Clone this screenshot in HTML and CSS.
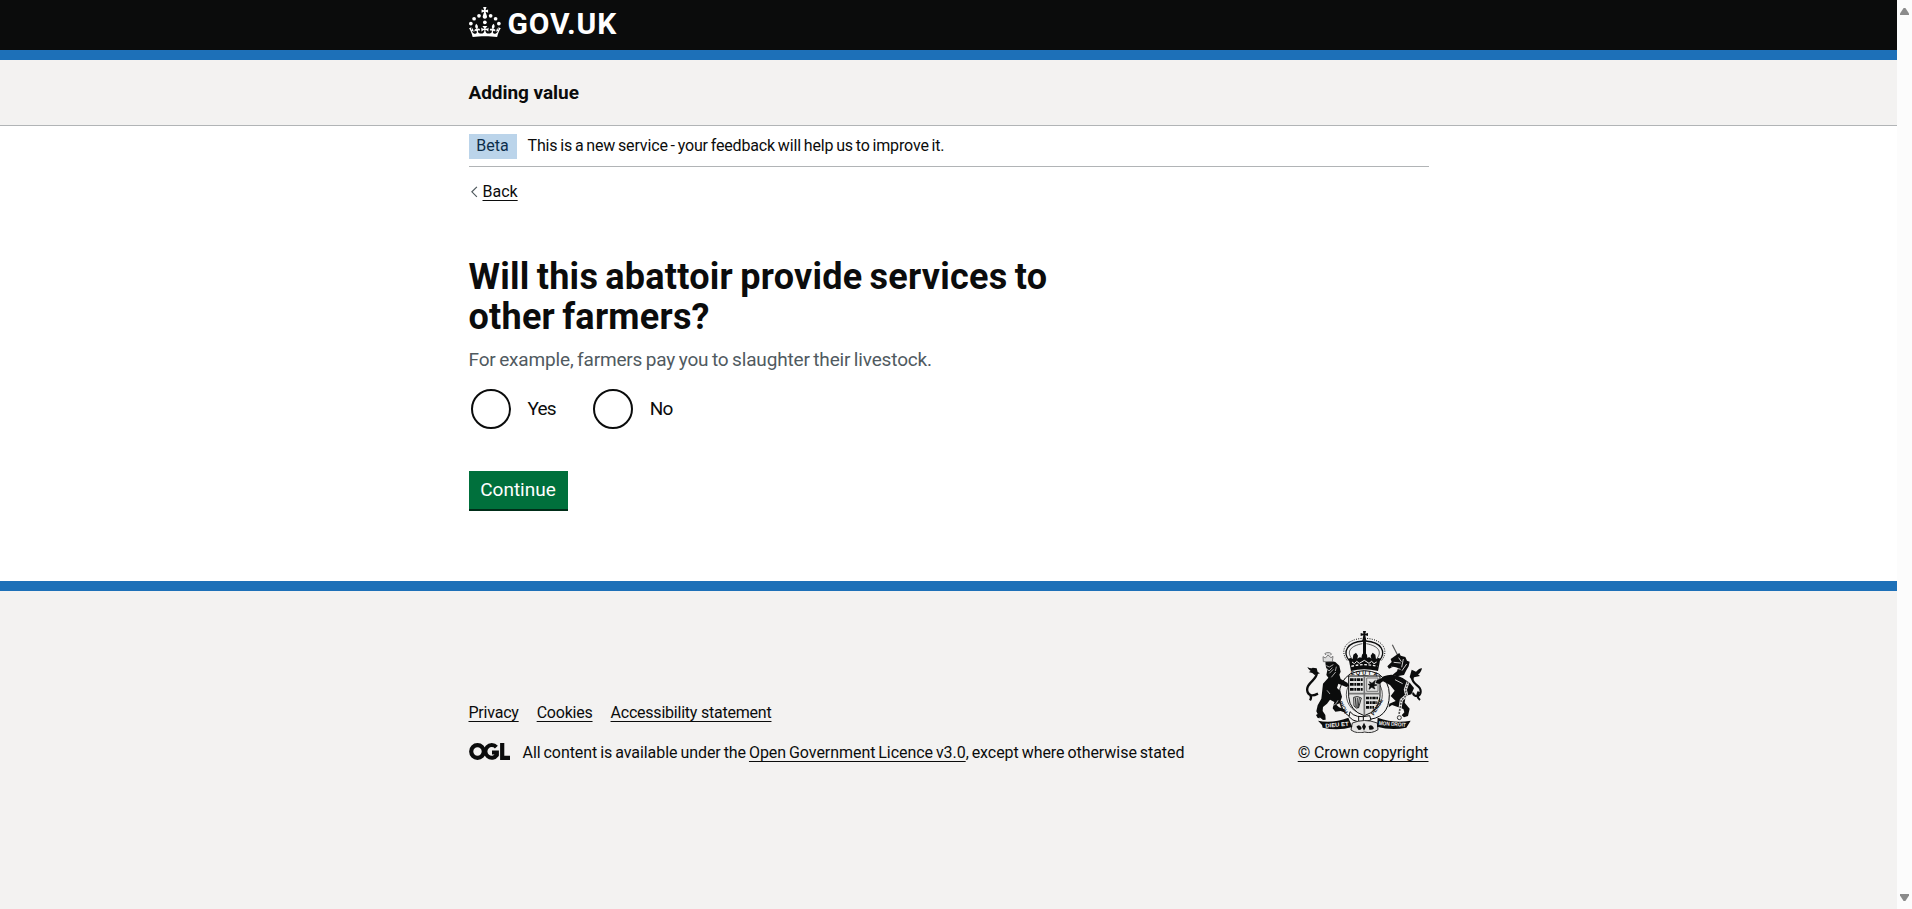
FILE: index.html
```html
<!DOCTYPE html>
<html lang="en">
<head>
<meta charset="utf-8">
<title>Adding value</title>
<link rel="stylesheet" href="styles.css">
</head>
<body>
<div class="viewport">
<div class="page">
  <header class="header">
    <div class="container header-inner">
      <svg class="crown" viewBox="0 0 64 60" width="32" height="30" fill="currentColor" aria-hidden="true">
        <circle cx="20" cy="17.6" r="3.7"/><circle cx="10.2" cy="23.5" r="3.7"/><circle cx="3.7" cy="33.2" r="3.7"/><circle cx="31.7" cy="30.6" r="3.7"/><circle cx="43.3" cy="17.6" r="3.7"/><circle cx="53.2" cy="23.5" r="3.7"/><circle cx="59.7" cy="33.2" r="3.7"/>
        <path d="M33.1,9.8c.2-.1.3-.3.5-.5l4.6,2.4v-6.8l-4.6,1.5c-.1-.2-.3-.3-.5-.5l1.9-5.9h-6.7l1.9,5.9c-.2.1-.3.3-.5.5l-4.6-1.5v6.8l4.6-2.4c.1.2.3.3.5.5l-2.6,8c-.9,2.8,1.2,5.7,4.1,5.7h0c3,0,5.1-2.9,4.1-5.7l-2.6-8ZM37,37.9s-3.4,3.8-4.1,6.1c2.2,0,4.2-.5,6.4-2.8l-.7,8.5c-2-2.8-4.4-4.1-5.7-3.8.1,3.1.5,6.7,5.8,7.2,3.7.3,6.7-1.5,7-3.8.4-2.6-2-4.3-3.7-1.6-1.4-4.5,2.4-6.1,4.9-3.2-1.9-4.5-1.8-7.7,2.4-10.9,3,4,2.6,7.3-1.2,11.1,2.4-1.3,6.2,0,4,4.6-1.2-2.8-3.7-2.2-4.2.2-.3,1.7.7,3.7,3,4.2,1.9.3,4.7-.9,7-5.9-1.3,0-2.4.7-3.9,1.7l2.4-8c.6,2.3,1.4,3.7,2.2,4.5.6-1.6.5-2.8,0-5.3l5,1.8c-2.6,3.6-5.2,8.7-7.3,17.5-7.4-1.1-15.7-1.7-24.5-1.7h0c-8.8,0-17.1.6-24.5,1.7-2.1-8.9-4.7-13.9-7.3-17.5l5-1.8c-.5,2.5-.6,3.7,0,5.3.8-.8,1.6-2.3,2.2-4.5l2.4,8c-1.5-1-2.6-1.7-3.9-1.7,2.3,5,5.2,6.2,7,5.9,2.3-.4,3.3-2.4,3-4.2-.5-2.4-3-3.1-4.2-.2-2.2-4.6,1.6-6,4-4.6-3.7-3.7-4.2-7.1-1.2-11.1,4.2,3.2,4.3,6.4,2.4,10.9,2.5-2.8,6.3-1.3,4.9,3.2-1.8-2.7-4.1-1-3.7,1.6.3,2.3,3.3,4.1,7,3.8,5.4-.5,5.7-4.2,5.8-7.2-1.3-.2-3.7,1-5.7,3.8l-.7-8.5c2.2,2.3,4.2,2.7,6.4,2.8-.7-2.3-4.1-6.1-4.1-6.1h10.6Z"/>
      </svg>
      <span class="wordmark">GOV.UK</span>
    </div>
  </header>
  <div class="service"><div class="container service-name">Adding value</div></div>
  <main class="container main">
    <div class="phase"><span class="tag">Beta</span><span class="phase-text">This is a new service - your feedback will help us to improve it.</span></div>
    <div class="back"><svg class="chevron" width="7" height="12" viewBox="0 0 7 12" fill="none" stroke="#505a5f" stroke-width="1.2" aria-hidden="true"><path d="M5.9.8.9 5.8l5 5"/></svg><a class="link">Back</a></div>
    <h1 class="title">Will this abattoir provide services to<br>other farmers?</h1>
    <p class="hint">For example, farmers pay you to slaughter their livestock.</p>
    <div class="radios">
      <label class="radio"><span class="ring"></span>Yes</label>
      <label class="radio"><span class="ring"></span>No</label>
    </div>
    <button class="button">Continue</button>
  </main>
  <footer class="footer">
    <div class="container footer-inner">
      <div class="footer-left">
        <div class="links"><a class="link">Privacy</a><a class="link">Cookies</a><a class="link">Accessibility statement</a></div>
        <div class="licence">
          <svg width="41" height="17" viewBox="0 0 41 17" fill="none" stroke="#0b0c0c" aria-hidden="true"><circle cx="8.5" cy="8.5" r="6.3" stroke-width="4.2"/><path d="M27.4 4.2A6.3 6.3 0 1 0 27.9 12V9.6H23" stroke-width="4"/><path d="M33.2 0v14.9H41" stroke-width="4.2"/></svg>
          <span class="licence-text">All content is available under the <a class="link">Open Government Licence v3.0</a>, except where otherwise stated</span>
        </div>
      </div>
      <div class="footer-right">
        <svg class="crest" width="116" height="102" viewBox="48 33 348 306" aria-hidden="true">
          <g fill="#0b0c0c">
            <!-- royal crown -->
            <path d="M219 33h9l-2 8 8-2v9l-8-2 2 11h-10l2-11-8 2v-9l8 2z"/>
            <circle cx="223" cy="61" r="6"/>
            <path d="M219 64h9v40h-9z"/>
            <path d="M176 116q7-5 12 1l2-13 8-6 6 9-2 9q8-8 12-2l2-10 7-9 8 9 1 10q6-5 12 2l-2-9 6-9 8 6 2 13q6-5 13-1l-7 37q-43-11-81 0z"/>
          </g>
          <g fill="none" stroke="#0b0c0c">
            <path d="M177 121c-20-25-6-55 42-58M269 121c20-25 6-55-42-58" stroke-width="4"/>
            <path d="M184 114c-14-20-3-36 33-43M262 114c14-20 3-36-33-43" stroke-width="2"/>
            <path d="M171 121c-22-29-6-62 46-66M275 121c22-29 6-62-46-66" stroke-width="3" stroke-dasharray="3 4"/>
          </g>
          <path d="M184 139q39-10 78 0" stroke="#f3f2f1" stroke-width="4" stroke-dasharray="8 5" fill="none"/>
          <path d="M186 126l7 5 7-7 8 6 15-9 14 9 8-6 7 7 8-5" stroke="#f3f2f1" stroke-width="3" fill="none"/>
          <!-- garter and shield -->
          <path d="M180 162q-32 22-32 62 0 75 75 75t75-75q0-40-32-62-43-20-86 0z" fill="#f3f2f1" stroke="#0b0c0c" stroke-width="3"/>
          <ellipse cx="223" cy="224" rx="54" ry="57" fill="#f3f2f1" stroke="#0b0c0c" stroke-width="2"/>
          <path d="M176 168h94v62q-3 43-47 57-44-14-47-57z" fill="#e2e2e1" stroke="#0b0c0c" stroke-width="3"/>
          <path d="M223 168v118M177 221h92" stroke="#777" stroke-width="5"/>
          <g fill="none" stroke="#0b0c0c">
            <path d="M180 179h39M180 193h39M180 208h39" stroke-width="8" stroke-dasharray="11 2 5 2"/>
            <path d="M228 234h38M228 248h34M228 262h24" stroke-width="8" stroke-dasharray="10 2 5 2"/>
            <path d="M230 174h34v40h-34z" stroke="#777" stroke-width="3"/>
            <path d="M238 185l8 5 10-9-3 12 8 2-10 4 4 8-10-5-8 6 3-11-6-4 8-1z" fill="#0b0c0c" stroke-width="2"/>
            <path d="M191 232q11-6 23 2l-8 29q-7 5-14-5zM196 233l2 28M202 233l-1 30M208 234l-4 30" stroke-width="2.5"/>
          </g>
          <g class="motto">
            <text x="184" y="166" transform="rotate(-12 184 166)">E</text><text x="198" y="165">Q</text><text x="217" y="165">U</text><text x="236" y="165">I</text><text x="250" y="166" transform="rotate(20 250 166)">A</text>
            <text x="174" y="277" transform="rotate(-118 174 277)">HONI</text>
            <text x="251" y="287" transform="rotate(-58 251 287)">PENSE</text>
          </g>
          <!-- lion -->
          <g fill="#0b0c0c">
            <path d="M106 127l14-5 16 4 12 11 4 18-4 9 4 13 20 11 6 9-9 4-24-10-4 13 10 9 5 17-6 19-11 5 8 8 15 5 4 11-14-5-16 2-8-10 5-19-13-7-9 12-12 10-1 12 8 12 1 14-8 1-11-9 2 4-7-1-5-9 5-3-4-8 4-18 11-20 3-27 2-18 16-18-6-8 3-14-4-9z"/>
            <path d="M52 141q12 7 16 2l12 2 3 11 7 4-16 5q-7-9-18-8l6-4q-7-4-10-12z"/>
          </g>
          <path d="M80 158c5 21-37 31-27 59q7 16 31 4M60 241q6-8 0-17" fill="none" stroke="#0b0c0c" stroke-width="7"/>
          <path d="M100 125l-1-15 7 4 8-9 9 8 6-4-2 16zM108 105q-8-5 2-7h9q10 3 2 8" fill="#ddd" stroke="#666" stroke-width="2.5"/>
          <g fill="none" stroke="#f3f2f1" stroke-width="2"><path d="M109 137l9 4 12-7M110 145l7 8 10-10M118 160l12-12M124 172l13-16M139 140l-3 13M111 211l9 11M144 241q-4 11-13 15"/></g>
          <!-- unicorn -->
          <path d="M307 74l16 32" stroke="#555" stroke-width="3.5"/>
          <g fill="#0b0c0c">
            <path d="M318 106l10-7 4 8 14 4 5 11 8 3-3 14-7 12-7 14-21 4-13-5 13-10 3-10-13-4-14 6-5-7 13-13-3-9z"/>
            <path d="M281 169q28-12 57 5l22 15 12 15-8 19-17 5-3 20 15 18-5 22-12 4-7-6 8-9-3-10-19-7-15-5-10 7 2-11 19-8-15-15 12-16-14-17-21-11-11 8-11-3 3-9 12-4z"/>
            <path d="M365 149l13 6q11-11 18-10-3 14-12 18l6 5-18 4-4 12-9-13z"/>
          </g>
          <path d="M367 175c-1 20 31 21 24 45-5 14-26 7-20-2M390 240q-13-10-4-25" fill="none" stroke="#0b0c0c" stroke-width="6.5"/>
          <path d="M311 127l21 2M326 113l8 12M340 117l-5 25M350 132l-14 20M304 141l28 7M315 179l23 12" stroke="#f3f2f1" stroke-width="2.5" fill="none"/>
          <path d="M354 186l-8 23 4 17-16 14-3 19-4 24" fill="none" stroke="#f3f2f1" stroke-width="9"/>
          <path d="M354 186l-8 23 4 17-16 14-3 19-4 24" fill="none" stroke="#555" stroke-width="5" stroke-dasharray="6 3"/>
          <circle cx="328" cy="293" r="6" fill="#f3f2f1" stroke="#333" stroke-width="3"/>
          <!-- buckle, roots and scroll -->
          <path d="M180 275q16 22 59 12l4 13q-46 15-66-10z" fill="#f3f2f1" stroke="#0b0c0c" stroke-width="3"/>
          <path d="M206 288v17M220 290v16" stroke="#0b0c0c" stroke-width="3"/>
          <path d="M187 309q36-15 75 0l2 20q-19 13-40 7-22 7-41-6z" fill="#e4e3e2" stroke="#333" stroke-width="3"/>
          <path d="M199 320q8-9 14 0t-7 10zM236 319q8-7 14 2t-12 8zM222 308l6 12-6 12-6-12z" fill="#0b0c0c"/>
          <path d="M84 302q43 9 91-9l12 28q-43 13-89 2l-2-8z" fill="#0b0c0c"/>
          <path d="M263 293q49 18 99 9l-13 21q-45 9-88-3z" fill="#0b0c0c"/>
          <g class="scroll"><text x="106" y="320" textLength="70" lengthAdjust="spacingAndGlyphs" transform="rotate(-5 142 315)">DIEU ET</text><text x="266" y="315" textLength="81" lengthAdjust="spacingAndGlyphs" transform="rotate(4 266 314)">MON DROIT</text></g>
        </svg>
        <a class="link copyright">© Crown copyright</a>
      </div>
    </div>
  </footer>
</div>
<div class="scrollbar"><i class="up"></i><i class="down"></i></div>
</div>
</body>
</html>
```
FILE: styles.css
```css
body{margin:0;font-family:Roboto,"Liberation Sans",sans-serif;color:#0b0c0c;font-size:16px;line-height:20px}
svg{display:block;flex:none}
.viewport{display:flex;height:909px;overflow:hidden;background:#fff}
.page{flex:1;display:flex;flex-direction:column}
.scrollbar{display:flex;flex-direction:column;justify-content:space-between;align-items:center;box-sizing:border-box;width:15px;padding:8px 0;background:#fcfcfc}
.up,.down{width:9px;height:7px;background:#8b8b8b}
.up{clip-path:polygon(40% 0,60% 0,100% 80%,100% 100%,0 100%,0 80%)}
.down{clip-path:polygon(0 0,100% 0,100% 20%,60% 100%,40% 100%,0 20%)}
.container{width:960px;margin:0 auto}
.link{text-decoration:underline;text-decoration-thickness:1px;text-underline-offset:3px;text-decoration-skip-ink:none}
.header{background:#0b0c0c;border-bottom:10px solid #1d70b8;color:#fff;height:50px}
.header-inner{display:flex;gap:7px}
.crown{margin-top:7px}
.wordmark{font-size:30px;font-weight:700;line-height:48px;letter-spacing:.8px}
.service{height:42px;padding-top:23px;background:#f3f2f1;border-bottom:1px solid #b1b4b6}
.service-name{font-size:19px;line-height:19px;font-weight:700;letter-spacing:-.05px}
.phase{display:flex;align-items:flex-start;gap:11px;padding:8px 0 7px;border-bottom:1px solid #b1b4b6;line-height:23px}
.tag{box-sizing:border-box;width:48px;height:25px;background:#bbd4ea;color:#0c2d4a;text-align:center}
.phase-text{letter-spacing:-.15px;word-spacing:-1px}
.back{display:flex;margin-top:15px;padding-left:2px;gap:5px}
.chevron{margin-top:4px}
.title{margin:55px 0 0;font-size:36px;line-height:40px;font-weight:700;letter-spacing:.25px;word-spacing:-2px}
.hint{margin:10px 0 0;font-size:19px;line-height:25px;color:#505a5f;letter-spacing:-.16px;word-spacing:-1px}
.radios{display:flex;gap:37px;margin-top:17px;padding-left:2px;font-size:19px;line-height:40px}
.radio{display:flex;gap:17px;letter-spacing:-.8px}
.ring{box-sizing:border-box;width:40px;height:40px;border:2px solid #0b0c0c;border-radius:50%}
.button{display:block;width:99px;height:38px;margin:42px 0 72px;padding:0;border:0;background:#00703c;box-shadow:0 2px 0 #002d18;color:#fff;font:19px/38px Roboto,"Liberation Sans",sans-serif}
.footer{flex:1;background:#f3f2f1;border-top:10px solid #1d70b8}
.footer-inner{display:flex;justify-content:space-between;align-items:flex-end;padding-top:40px}
.footer-left{display:flex;flex-direction:column;gap:20px}
.links{display:flex;gap:18px;letter-spacing:-.22px}
.licence{display:flex;gap:13px}
.licence-text{letter-spacing:-.05px;word-spacing:-1px}
.footer-right{display:flex;flex-direction:column;align-items:flex-end;gap:10px}
.crest{margin-right:7px}
.copyright{letter-spacing:-.1px}
.motto{font:bold 16px "Liberation Sans",sans-serif;fill:#0b0c0c}
.scroll{font:bold 17px "Liberation Sans",sans-serif;fill:#f3f2f1}
```
